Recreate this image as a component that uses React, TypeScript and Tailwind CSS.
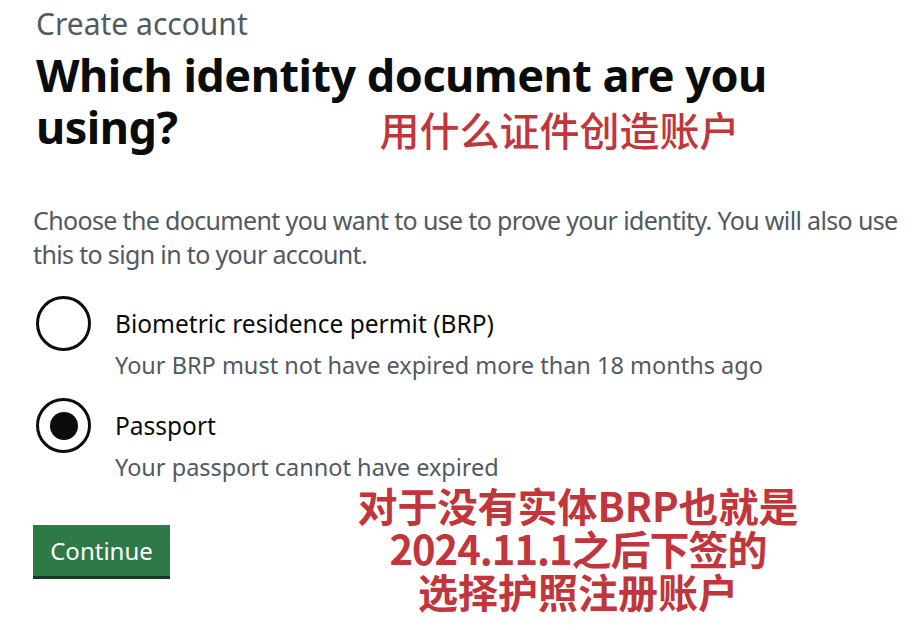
import React from "react";

export default function App() {
  return (
    <div className="w-[916px] h-[630px] bg-white overflow-hidden pl-[36px] pt-[4px] text-[#0b0c0c] font-['Noto_Sans','Noto_Sans_CJK_SC',sans-serif]">
      <div className="text-[30px] leading-[40px] text-[#505a5f]">Create account</div>
      <h1 className="mt-[5px] text-[45px] leading-[52px] font-bold tracking-[-0.5px]">
        <div>Which identity document are you</div>
        <div className="flex items-end">
          <span>using?</span>
          <span className="ml-[202px] text-[40px] leading-[48px] font-medium text-[#c1363b] tracking-normal font-['Noto_Sans_CJK_SC',sans-serif]">
            用什么证件创造账户
          </span>
        </div>
      </h1>
      <p className="mt-[50px] -ml-[3px] text-[25px] leading-[34px] text-[#505a5f] tracking-[-0.65px] whitespace-nowrap">
        Choose the document you want to use to prove your identity. You will also use
        <br />
        this to sign in to your account.
      </p>
      <div className="mt-[25px] flex flex-col gap-[17px]">
        <div className="flex items-start">
          <div className="w-[55px] h-[55px] rounded-full border-[3px] border-[#0b0c0c] shrink-0" />
          <div className="ml-[24px] pt-[12px]">
            <div className="text-[24.5px] leading-[32px] text-[#0b0c0c]">Biometric residence permit (BRP)</div>
            <div className="mt-[9px] text-[23.5px] leading-[32px] text-[#505a5f]">Your BRP must not have expired more than 18 months ago</div>
          </div>
        </div>
        <div className="flex items-start">
          <div className="w-[55px] h-[55px] rounded-full border-[3px] border-[#0b0c0c] shrink-0 flex items-center justify-center">
            <div className="w-[28px] h-[28px] rounded-full bg-[#0b0c0c]" />
          </div>
          <div className="ml-[24px] pt-[12px]">
            <div className="text-[24.5px] leading-[32px] text-[#0b0c0c]">Passport</div>
            <div className="mt-[9px] text-[23.5px] leading-[32px] text-[#505a5f]">Your passport cannot have expired</div>
          </div>
        </div>
      </div>
      <div className="flex items-start">
        <button className="mt-[42px] -ml-[3px] w-[137px] h-[51px] shrink-0 bg-[#2e7a47] text-white text-[24px] shadow-[0_3px_0_#173b22] flex items-center justify-center">
          Continue
        </button>
        <div className="ml-[168px] mt-[1px] w-[480px] shrink-0 text-center text-[40px] leading-[43px] font-bold text-[#c1363b] font-['Noto_Sans_CJK_SC',sans-serif]">
          <div>对于没有实体BRP也就是</div>
          <div className="tracking-[-1px]">2024.11.1之后下签的</div>
          <div>选择护照注册账户</div>
        </div>
      </div>
    </div>
  );
}
